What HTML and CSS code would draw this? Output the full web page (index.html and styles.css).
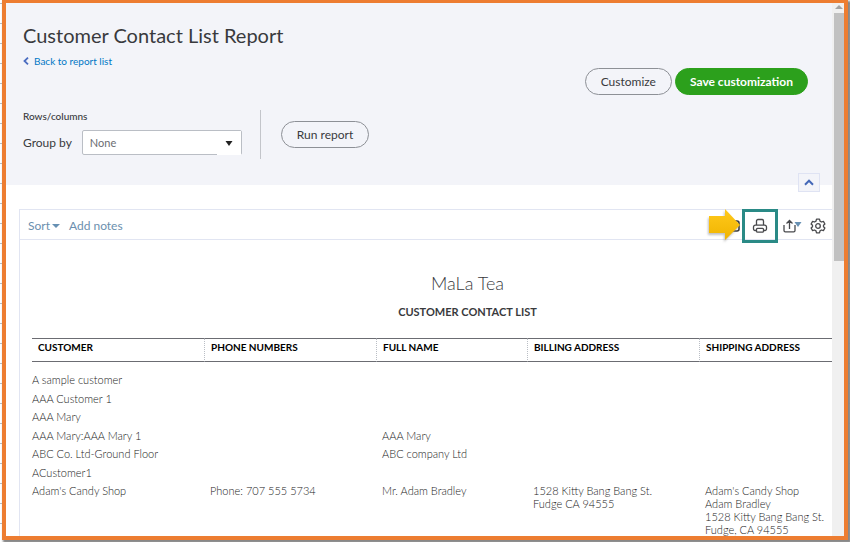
FILE: index.html
```html
<!DOCTYPE html>
<html lang="en">
<head>
<meta charset="utf-8">
<title>Customer Contact List Report</title>
<link rel="stylesheet" href="styles.css">
</head>
<body>
<div class="frame">
  <main class="page">
    <header class="panel">
      <h1 class="title">Customer Contact List Report</h1>
      <a class="back" href="#">
        <svg width="6" height="8" viewBox="0 0 6 8" aria-hidden="true"><path d="M5 .7 1.5 4 5 7.3" fill="none" stroke="#4a6cc0" stroke-width="1.8"/></svg>
        Back to report list
      </a>
      <div class="actions">
        <button class="btn" type="button">Customize</button>
        <button class="btn btn-primary" type="button">Save customization</button>
      </div>
      <div class="filters">
        <div class="group">
          <div class="group-title">Rows/columns</div>
          <div class="field">
            <label for="group-by">Group by</label>
            <div class="select">
              <select id="group-by"><option>None</option></select>
              <span class="arrow"><svg width="8" height="5" viewBox="0 0 8 5" aria-hidden="true"><path d="M.5 0h7L4 5z" fill="#222"/></svg></span>
            </div>
          </div>
        </div>
        <button class="btn btn-run" type="button">Run report</button>
      </div>
      <button class="collapse" type="button" aria-label="Collapse">
        <svg width="10" height="7" viewBox="0 0 10 7" aria-hidden="true"><path d="M1 5.7 5 1.7l4 4" fill="none" stroke="#4468b8" stroke-width="2"/></svg>
      </button>
    </header>

    <section class="report">
      <div class="toolbar">
        <button class="link" type="button">Sort <svg width="8" height="4" viewBox="0 0 8 4" aria-hidden="true"><path d="M0 0h8L4 4z" fill="#6690b3"/></svg></button>
        <button class="link" type="button">Add notes</button>
        <div class="tools">
          <button class="icon email" type="button" aria-label="Email">
            <svg width="15" height="12" viewBox="0 0 15 12" aria-hidden="true"><rect x="1" y="1" width="13" height="10" rx="2" fill="none" stroke="#393a3d" stroke-width="1.6"/><path d="m2 3 5.5 4L13 3" fill="none" stroke="#393a3d" stroke-width="1.5"/></svg>
            <svg class="pointer" width="36" height="37" viewBox="0 0 36 37" aria-hidden="true">
              <defs><linearGradient id="gold" x2="0" y2="1"><stop stop-color="#ffc91c"/><stop offset="1" stop-color="#f0b400"/></linearGradient></defs>
              <path d="M2 9h16V2l15 16-15 15v-7H2z" fill="url(#gold)"/>
            </svg>
          </button>
          <button class="icon print" type="button" aria-label="Print">
            <svg width="16" height="16" viewBox="0 0 16 16" fill="none" stroke="#494a4d" stroke-width="1.3" aria-hidden="true"><path d="M4.500 7V3a1.500 1.500 0 0 1 1.500-1.500h4A1.500 1.500 0 0 1 11.500 3v4"/><path d="M4 12.500H3A1.500 1.500 0 0 1 1.500 11V9A1.800 1.800 0 0 1 3.300 7.200h9.400A1.800 1.800 0 0 1 14.500 9v2a1.500 1.500 0 0 1-1.500 1.500h-1"/><path d="M5.500 10.300h5a1 1 0 0 1 1 1V13a1.200 1.200 0 0 1-1.200 1.200H5.700A1.200 1.200 0 0 1 4.500 13v-1.700a1 1 0 0 1 1-1z"/></svg>
          </button>
          <button class="icon export" type="button" aria-label="Export">
            <svg width="19" height="14" viewBox="0 0 19 14" fill="none" stroke="#494a4d" stroke-width="1.3" aria-hidden="true"><path d="M1 6v5.500A1.300 1.300 0 0 0 2.300 12.800h8.400a1.300 1.300 0 0 0 1.300-1.300V6M6.500 10V1.500M3.500 4.500l3-3 3 3"/><path d="M11.500 3h7L15 8z" fill="#6690b3" stroke="none"/></svg>
          </button>
          <button class="icon" type="button" aria-label="Settings">
            <svg width="16" height="16" viewBox="0 0 16 16" fill="none" stroke="#494a4d" stroke-width="1.3" stroke-linejoin="round" aria-hidden="true"><path d="M6.500 1.200h3l.5 1.900 1.500.9 1.900-.6 1.500 2.600L13.500 7.300v1.400l1.400 1.300-1.500 2.600-1.900-.6-1.500.9-.5 1.900h-3L6 12.900 4.500 12l-1.900.6L1.100 10l1.400-1.300V7.300L1.100 6l1.500-2.600 1.900.6L6 3.100z"/><circle cx="8" cy="8" r="2.300"/></svg>
          </button>
        </div>
      </div>
      <h2 class="company">MaLa Tea</h2>
      <h3 class="report-name">CUSTOMER CONTACT LIST</h3>
      <table class="contacts">
        <colgroup><col class="wide"><col class="wide"><col class="name"><col class="wide"><col></colgroup>
        <thead>
          <tr><th>CUSTOMER</th><th>PHONE NUMBERS</th><th>FULL NAME</th><th>BILLING ADDRESS</th><th>SHIPPING ADDRESS</th></tr>
        </thead>
        <tbody>
          <tr><td>A sample customer</td><td></td><td></td><td></td><td></td></tr>
          <tr><td>AAA Customer 1</td><td></td><td></td><td></td><td></td></tr>
          <tr><td>AAA Mary</td><td></td><td></td><td></td><td></td></tr>
          <tr><td>AAA Mary:AAA Mary 1</td><td></td><td>AAA Mary</td><td></td><td></td></tr>
          <tr><td>ABC Co. Ltd-Ground Floor</td><td></td><td>ABC company Ltd</td><td></td><td></td></tr>
          <tr><td>ACustomer1</td><td></td><td></td><td></td><td></td></tr>
          <tr><td>Adam's Candy Shop</td><td>Phone: 707 555 5734</td><td>Mr. Adam Bradley</td><td>1528 Kitty Bang Bang St.<br>Fudge CA 94555</td><td>Adam's Candy Shop<br>Adam Bradley<br>1528 Kitty Bang Bang St.<br>Fudge, CA 94555</td></tr>
        </tbody>
      </table>
    </section>
  </main>
  <div class="scrollbar" aria-hidden="true">
    <svg width="8" height="4" viewBox="0 0 8 4"><path d="M0 4h8L4 0z" fill="#a3a3a3"/></svg>
    <div class="thumb"></div>
  </div>
</div>
</body>
</html>
```
FILE: styles.css
```css
* { box-sizing: border-box; }

body {
  margin: 0;
  height: 100vh;
  padding: 0 2px 2px;
  overflow: hidden;
  display: flex;
  background: repeating-linear-gradient(#fff 0 3px, #b8bcc0 3px 4px, #fff 4px 20px);
  font-family: Lato, "Liberation Sans", sans-serif;
  font-size: 11px;
  line-height: 13px;
  color: #393a3d;
}

button, select { font: inherit; color: inherit; margin: 0; }
button { cursor: pointer; }
svg { display: block; }

.frame {
  flex: 1;
  min-width: 0;
  display: flex;
  border: 4px solid #ed7d31;
  border-top-width: 3px;
  background: #fff;
  box-shadow: 2px 2px 2px 1px #888;
}

.page { flex: 1; min-width: 0; overflow: hidden; }

.panel {
  position: relative;
  padding: 20px 24px 26px 17px;
  background: #f3f4f9;
}

.title { margin: 0; font-size: 20px; line-height: 24px; font-weight: 400; }

.back {
  display: flex;
  align-items: center;
  gap: 5px;
  margin-top: 8px;
  font-size: 10px;
  line-height: 12px;
  color: #0077c5;
  text-decoration: none;
}

.actions { display: flex; justify-content: flex-end; gap: 3px; margin-top: 1px; }

.btn {
  height: 27px;
  padding: 0 15px;
  border: 1px solid #8d9096;
  border-radius: 14px;
  background: transparent;
  font-size: 12px;
  font-weight: 400;
}
.btn-primary { padding: 0 14px; border-color: #2ca01c; background: #2ca01c; color: #fff; font-weight: 700; }

.filters { display: flex; align-items: center; gap: 20px; margin-top: 15px; }
.group { height: 49px; padding-right: 18px; border-right: 1px solid #c3c5ca; }
.group-title { font-size: 10px; font-weight: 500; }
.field { display: flex; align-items: center; gap: 10px; margin-top: 7px; font-size: 12px; }

.select { position: relative; width: 160px; height: 25px; }
.select select {
  width: 100%;
  height: 100%;
  padding: 0 7px;
  border: 1px solid #babec5;
  border-radius: 2px;
  background: #fff;
  appearance: none;
  font-size: 11px;
  color: #6b6c72;
}
.arrow {
  position: absolute;
  right: 1px;
  bottom: 0;
  width: 24px;
  height: 24px;
  display: grid;
  place-items: center;
  background: #fff;
  pointer-events: none;
}

.collapse {
  position: absolute;
  right: 12px;
  bottom: -7px;
  width: 22px;
  height: 19px;
  padding: 0;
  display: grid;
  place-items: center;
  border: 1px solid #dfe3f3;
  background: #f3f4f9;
}

.report {
  margin: 24px 0 0 13px;
  border: 1px solid #e1e5f2;
  border-width: 1px 0 0 1px;
}

.toolbar {
  display: flex;
  align-items: center;
  gap: 9px;
  height: 30px;
  padding: 2px 6px 0 8px;
  border-bottom: 1px solid #e1e5f2;
}
.link {
  display: flex;
  align-items: center;
  gap: 2px;
  padding: 0;
  border: 0;
  background: none;
  font-size: 12px;
  color: #6b8fae;
}

.tools { display: flex; align-items: center; margin-left: auto; }
.icon { padding: 0; border: 0; background: none; }
.email { position: relative; margin-right: 2px; }
.pointer {
  position: absolute;
  right: -3px;
  top: -13px;
  filter: drop-shadow(-1px 2px 1px #8888);
}
.print {
  display: grid;
  place-items: center;
  width: 36px;
  height: 34px;
  border: 3px solid #2a8a86;
}
.export { margin: 0 8px 0 5px; }

.company { margin: 32px 0 0; padding-left: 83px; text-align: center; font-size: 18px; line-height: 22px; font-weight: 300; }
.report-name { margin: 10px 0 0; padding-left: 83px; text-align: center; font-size: 11px; line-height: 16px; font-weight: 700; }

.contacts {
  width: calc(100% - 12px);
  margin: 18px 0 0 12px;
  border-collapse: separate;
  border-spacing: 0;
  table-layout: fixed;
}
.wide { width: 172px; }
.name { width: 151px; }
.contacts th, .contacts td { text-align: left; vertical-align: top; white-space: nowrap; }
.contacts th {
  height: 24px;
  padding: 2px 6px;
  border: solid #6b6c72;
  border-width: 1px 0;
  font-size: 10px;
  line-height: 12px;
  color: #000;
}
.contacts th + th { border-left: 1px dotted #babec5; }
.contacts td { height: 19px; padding: 3px 0 0 6px; font-weight: 300; color: #222; }
.contacts td:first-child { padding-left: 0; }
.contacts tbody tr:nth-child(even) td { height: 18px; }
.contacts tbody::before { content: ""; display: block; height: 8px; }

.scrollbar {
  display: flex;
  flex-direction: column;
  align-items: flex-end;
  width: 12px;
  padding-top: 2px;
  background: #f0f0f0;
}
.scrollbar svg { margin-right: 1px; }
.thumb { width: 10px; height: 248px; margin-top: 4px; background: #c1c1c1; }
```
